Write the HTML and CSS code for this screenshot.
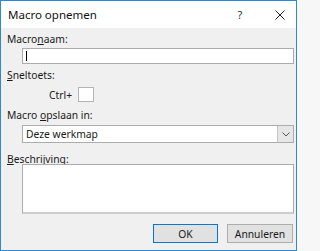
FILE: index.html
```html
<!DOCTYPE html>
<html>
<head>
<meta charset="utf-8">
<link rel="stylesheet" href="styles.css">
</head>
<body>
<div class="dialog">
  <div class="titlebar">
    <span class="title">Macro opnemen</span>
    <span class="tbtn help">?</span>
    <span class="tbtn close"><svg width="10" height="10" viewBox="0 0 10 10"><path d="M0.5 0.5L9.5 9.5M9.5 0.5L0.5 9.5" stroke="#222" stroke-width="1" fill="none"/></svg></span>
  </div>
  <div class="content">
    <div class="label">Macro<u>n</u>aam:</div>
    <div class="input name"><span class="caret"></span></div>
    <div class="label shortcut"><u>S</u>neltoets:</div>
    <div class="ctrlrow"><span class="ctrl">Ctrl+</span><span class="keybox"></span></div>
    <div class="label store">Macro <u>o</u>pslaan in:</div>
    <div class="select"><span class="seltext">Deze werkmap</span><span class="dropbtn"><svg width="8" height="5" viewBox="0 0 8 5"><path d="M0.5 0.5L4 4L7.5 0.5" stroke="#555" stroke-width="1" fill="none"/></svg></span></div>
    <div class="label desc"><u>B</u>eschrijving:</div>
    <div class="textarea"></div>
    <div class="buttons">
      <span class="btn ok">OK</span>
      <span class="btn cancel">Annuleren</span>
    </div>
  </div>
</div>
</body>
</html>
```
FILE: styles.css
```css
html, body {
  margin: 0;
  padding: 0;
  background: #f7f7f7;
}
body {
  width: 300px;
  height: 251px;
  font-family: "Noto Sans", "Open Sans", sans-serif;
  font-size: 10.3px;
  color: #1a1a1a;
}
.dialog {
  width: 297px;
  height: 251px;
  box-sizing: border-box;
  border: 1px solid #2b8ad8;
  background: #f0f0f0;
  display: flex;
  flex-direction: column;
}
.titlebar {
  height: 27px;
  background: #fff;
  display: flex;
  align-items: center;
  padding-left: 7px;
}
.title {
  flex: 1;
  font-size: 11.5px;
  color: #111;
}
.tbtn {
  width: 32px;
  display: flex;
  justify-content: center;
  align-items: center;
  height: 27px;
}
.help {
  font-size: 11px;
  margin-right: 8px;
  color: #333;
}
.content {
  padding: 5px 2px 0 6px;
  display: flex;
  flex-direction: column;
  align-items: flex-start;
}
.label {
  height: 13px;
  line-height: 13px;
  white-space: nowrap;
}
u {
  text-decoration-thickness: 1px;
  text-underline-offset: 1px;
}
.input {
  margin-top: 2px;
  margin-left: 15px;
  width: 272px;
  height: 16px;
  box-sizing: border-box;
  border: 1px solid #acacac;
  background: #fff;
  display: flex;
  align-items: center;
  padding-left: 3px;
}
.caret {
  width: 1px;
  height: 10px;
  background: #000;
}
.shortcut {
  margin-top: 5px;
}
.ctrlrow {
  margin-top: 5px;
  margin-left: 42px;
  display: flex;
  align-items: center;
  height: 15px;
}
.ctrl {
  margin-right: 6px;
}
.keybox {
  width: 16px;
  height: 15px;
  box-sizing: border-box;
  border: 1px solid #b4b4b4;
  background: #fff;
}
.store {
  margin-top: 7px;
}
.select {
  margin-top: 3px;
  margin-left: 15px;
  width: 272px;
  height: 18px;
  box-sizing: border-box;
  border: 1px solid #acacac;
  background: #fff;
  display: flex;
  align-items: center;
}
.seltext {
  flex: 1;
  padding-left: 3px;
}
.dropbtn {
  width: 15px;
  height: 16px;
  background: #e6e6e6;
  border-left: 1px solid #c8c8c8;
  display: flex;
  justify-content: center;
  align-items: center;
}
.desc {
  margin-top: 10px;
  height: 12px;
  line-height: 12px;
}
.textarea {
  margin-top: -1px;
  margin-left: 15px;
  width: 272px;
  height: 50px;
  box-sizing: border-box;
  border: 1px solid #acacac;
  border-bottom: 2px solid #cdcdcd;
  background: #fff;
}
.buttons {
  margin-top: 10px;
  align-self: stretch;
  display: flex;
  justify-content: flex-end;
  gap: 9px;
  padding-right: 1px;
}
.btn {
  height: 19px;
  box-sizing: border-box;
  background: #e1e1e1;
  border: 1px solid #adadad;
  display: flex;
  align-items: center;
  justify-content: center;
}
.ok {
  width: 65px;
  border-color: #0078d7;
}
.cancel {
  width: 66px;
}
```
